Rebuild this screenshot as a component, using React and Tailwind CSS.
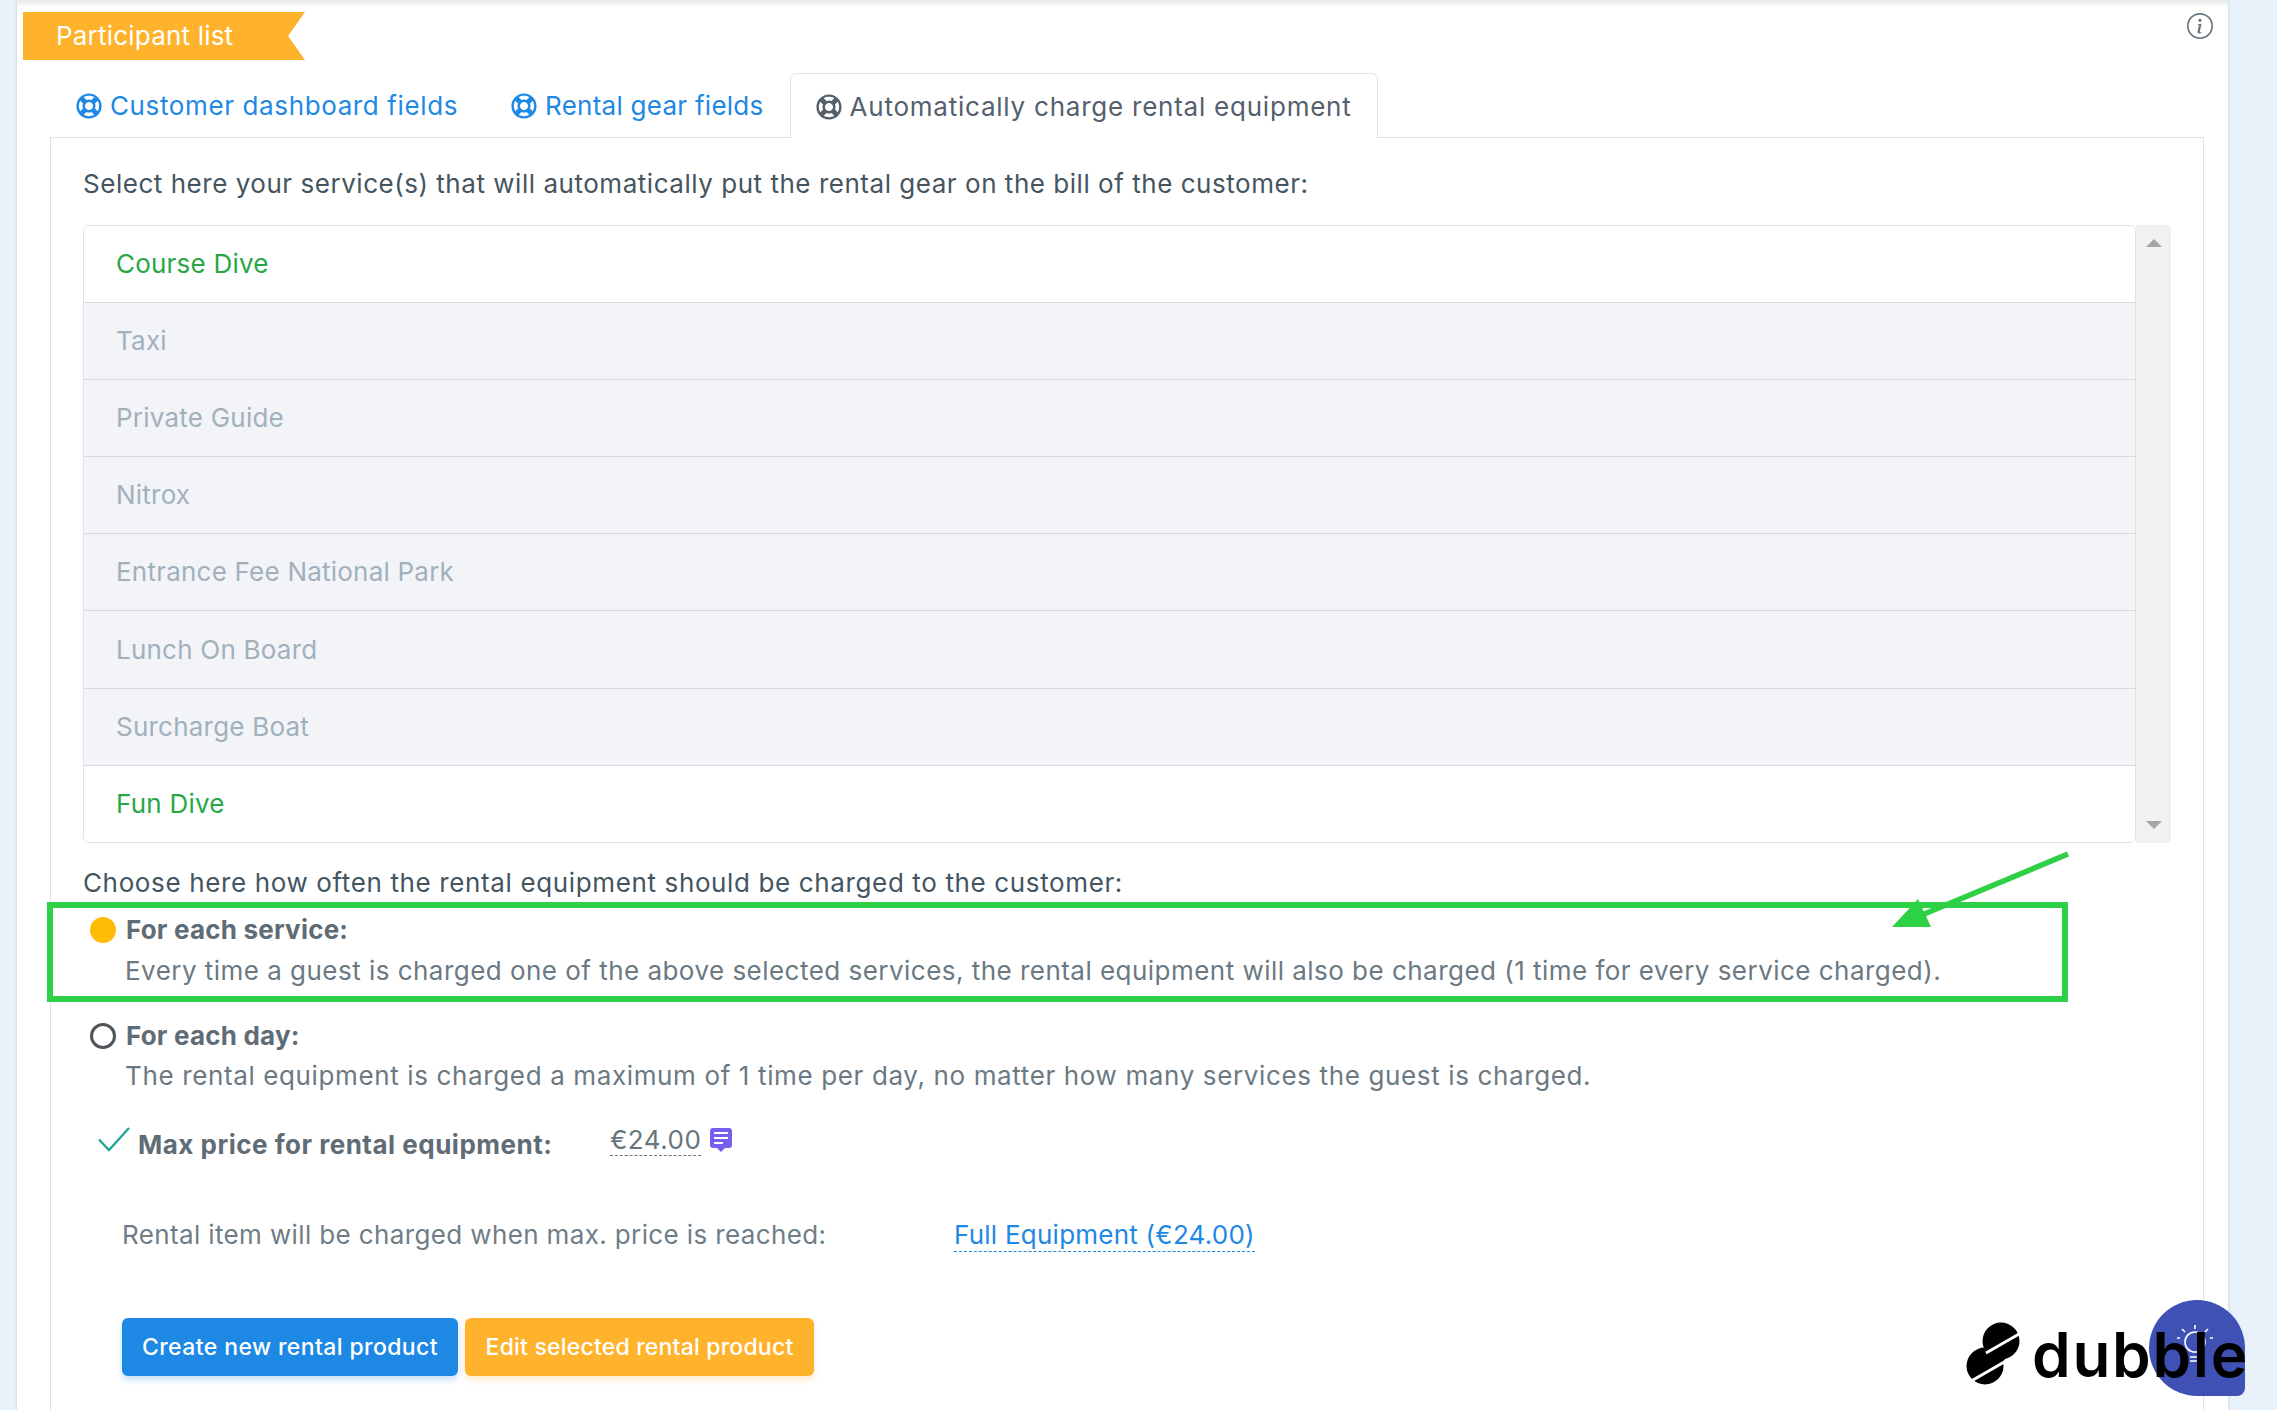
import React from 'react';
import { FaRegLifeRing } from 'react-icons/fa';
import { BsInfoCircle } from 'react-icons/bs';

const services = [
  { name: 'Course Dive', active: true, height: 'h-[77px]' },
  { name: 'Taxi', height: 'h-[77px]' },
  { name: 'Private Guide', height: 'h-[77px]' },
  { name: 'Nitrox', height: 'h-[77px]' },
  { name: 'Entrance Fee National Park', height: 'h-[77px]' },
  { name: 'Lunch On Board', height: 'h-[78px]' },
  { name: 'Surcharge Boat', height: 'h-[77px]' },
  { name: 'Fun Dive', active: true, height: 'h-[76px]' },
];

const Tab = ({ label, active, className }) => (
  <div
    className={
      (active
        ? 'relative z-10 -mb-px flex h-[65px] items-center gap-2 rounded-t-md border border-b-0 border-[#dee2e6] bg-white px-[25px] pt-[2px] text-[#54606c] '
        : 'flex h-[64px] items-center gap-2 px-[26px] pt-[2px] text-[#1e88e5] ') + className
    }
  >
    <FaRegLifeRing size={26} />
    <span>{label}</span>
  </div>
);

const Radio = ({ checked }) => (
  checked
    ? <span className="h-[26px] w-[26px] shrink-0 rounded-full bg-[#ffbc05]" />
    : <span className="h-[26px] w-[26px] shrink-0 rounded-full border-[3px] border-[#4f5459]" />
);

export default function App() {
  return (
    <div className="relative flex h-[1410px] overflow-hidden bg-[#e9f1fa] pl-[17px] pr-[49px] font-['Inter',sans-serif] text-[26px] leading-[34px] tracking-[0.5px]">
      <div className="relative w-[2211px] bg-white shadow-[0_0_3px_rgba(120,140,160,0.4)]">
        <div className="absolute left-0 right-0 top-0 h-[8px] bg-gradient-to-b from-[#e6e8ea] to-white" />
        <BsInfoCircle size={26} className="absolute left-[2170px] top-[13px] text-[#67757c]" />

        {/* Ribbon */}
        <div className="relative ml-[6px] mt-[12px] flex h-[48px] w-[282px] items-center bg-[#ffb22b] pl-[33px] text-[26px] tracking-[0.2px] text-white [clip-path:polygon(0_0,100%_0,94%_50%,100%_100%,0_100%)]">
          Participant list
        </div>

        {/* Tabs */}
        <div className="ml-[33px] mt-[13px] flex">
          <Tab label="Customer dashboard fields" className="pr-[27px] tracking-[0.62px]" />
          <Tab label="Rental gear fields" className="tracking-[0.26px]" />
          <Tab label="Automatically charge rental equipment" active className="tracking-[0.77px]" />
        </div>

        {/* Panel */}
        <div className="ml-[33px] h-[1300px] w-[2154px] border border-[#dee2e6] px-[32px] pt-[28px] text-[#455560]">
          <p className="mb-[23px] h-[36px] leading-[36px] tracking-[0.53px]">Select here your service(s) that will automatically put the rental gear on the bill of the customer:</p>

          <div className="flex w-[2088px]">
            <div className="w-[2053px] overflow-hidden rounded-md border border-[#dee2e6] tracking-[0.22px]">
              {services.map((service, i) => (
                <div
                  key={service.name}
                  className={
                    'flex items-center border-b pl-[32px] ' + service.height + ' ' +
                    (i < services.length - 1 ? 'border-[#d5d8dd] ' : 'border-white ') +
                    (service.active ? 'bg-white text-[#28a745]' : 'bg-[#f2f4f8] text-[#a1b1bc]')
                  }
                >
                  {service.name}
                </div>
              ))}
            </div>
            <div className="flex w-[35px] flex-col items-center justify-between bg-[#f1f1f1] py-[14px]">
              <span className="h-0 w-0 border-x-[8px] border-b-[8px] border-x-transparent border-b-[#a6a6a6]" />
              <span className="h-0 w-0 border-x-[8px] border-t-[8px] border-x-transparent border-t-[#a6a6a6]" />
            </div>
          </div>

          <p className="mt-[23px] h-[34px] tracking-[0.63px]">Choose here how often the rental equipment should be charged to the customer:</p>

          <div className="ml-[7px] mt-[13px] flex h-[34px] items-center gap-[10px] font-bold tracking-[0.2px] text-[#5f6c75]">
            <Radio checked />
            For each service:
          </div>
          <p className="ml-[42px] mt-[7px] h-[34px] tracking-[0.47px] text-[#6b7983]">Every time a guest is charged one of the above selected services, the rental equipment will also be charged (1 time for every service charged).</p>

          <div className="ml-[7px] mt-[31px] flex h-[34px] items-center gap-[10px] font-bold tracking-[0.2px] text-[#5f6c75]">
            <Radio />
            For each day:
          </div>
          <p className="ml-[42px] mt-[6px] h-[34px] tracking-[0.63px] text-[#6b7983]">The rental equipment is charged a maximum of 1 time per day, no matter how many services the guest is charged.</p>

          <div className="relative ml-[55px] mt-[35px] flex h-[34px] items-center font-bold text-[#5f6c75]">
            <svg className="absolute -left-[41px] -top-[1px]" width="34" height="26" viewBox="0 0 34 26" fill="none">
              <path d="M2 12.5 L12 23 L32 1" stroke="#20a597" strokeWidth="2.4" />
            </svg>
            <span className="w-[472px]">Max price for rental equipment:</span>
            <span className="-mt-[10px] border-b border-dashed border-[#67757c] font-normal leading-[30px] text-[#67757c]">€24.00</span>
            <svg className="-mt-[10px] ml-[9px]" width="22" height="24" viewBox="0 0 22 24">
              <path d="M3 0 H19 A3 3 0 0 1 22 3 V17 A3 3 0 0 1 19 20 H15 L11 24 L7 20 H3 A3 3 0 0 1 0 17 V3 A3 3 0 0 1 3 0 Z" fill="#7460ee" />
              <path d="M4 5 H18 M4 10 H18 M4 15 H13" stroke="#fff" strokeWidth="2" />
            </svg>
          </div>

          <div className="ml-[39px] mt-[56px] flex h-[34px] items-center text-[#6f7d87]">
            <span className="w-[832px] tracking-[0.37px]">Rental item will be charged when max. price is reached:</span>
            <span className="border-b border-dashed border-[#1e88e5] leading-[32px] tracking-[0.24px] text-[#1e88e5]">Full Equipment (€24.00)</span>
          </div>

          <div className="ml-[39px] mt-[66px] flex gap-[7px] text-[23px] font-medium text-white">
            <button className="h-[58px] w-[336px] rounded-md bg-[#1e88e5] tracking-[0.4px] shadow-[0_4px_6px_rgba(30,136,229,0.25)]">Create new rental product</button>
            <button className="h-[58px] w-[349px] rounded-md bg-[#ffb22b] tracking-[0.2px] shadow-[0_4px_6px_rgba(255,178,43,0.25)]">Edit selected rental product</button>
          </div>
        </div>

        {/* Green annotation */}
        <div className="absolute left-[30px] top-[902px] h-[100px] w-[2021px] border-[6px] border-[#2ed145]" />
        <svg className="absolute left-[1860px] top-[840px]" width="200" height="100" viewBox="0 0 200 100" fill="none">
          <path d="M191 14 L40 77" stroke="#2ed145" strokeWidth="5.5" />
          <path d="M15 87 L41 59 L54 87 Z" fill="#2ed145" />
        </svg>
      </div>

      {/* Help bubble */}
      <div className="absolute left-[2149px] top-[1300px] h-[96px] w-[96px] rounded-[48px] rounded-br-[8px] bg-[#3f51b5]">
        <svg className="absolute left-[28px] top-[24px]" width="36" height="44" viewBox="0 0 36 44" fill="none" stroke="#fff" strokeWidth="1.6">
          <circle cx="18" cy="18" r="10" />
          <path d="M18 1 V5 M5 5 L8 8 M31 5 L28 8 M0 14 H3 M33 14 H36 M13 33 H23 M13 37 H23" />
        </svg>
      </div>

      {/* Watermark */}
      <div className="absolute left-[1960px] top-[1320px] flex items-center gap-[2px]">
        <svg width="70" height="70" viewBox="0 0 70 70">
          <circle cx="41" cy="21" r="18.5" fill="#000" />
          <circle cx="25" cy="46" r="18.5" fill="#000" />
          <path d="M28 24 L50 32 L40 46 L14 38 Z" fill="#000" />
          <path d="M66 10 L26 33 M46 41 L6 64" stroke="#fff" strokeWidth="3" />
        </svg>
        <span className="text-[62px] font-semibold leading-[62px] tracking-[1.7px] text-black">dubble</span>
      </div>
    </div>
  );
}
